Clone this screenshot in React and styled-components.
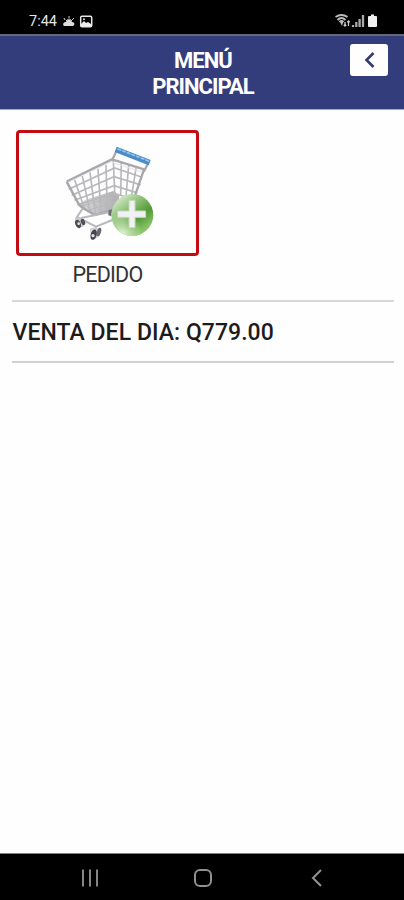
import React from 'react';
import styled, { createGlobalStyle } from 'styled-components';

const GlobalStyle = createGlobalStyle`
  * { box-sizing: border-box; }
  body { margin: 0; background: #fefefe; font-family: Roboto, "Liberation Sans", sans-serif; }
`;

const Screen = styled.div`
  width: 404px;
  height: 900px;
  display: flex;
  flex-direction: column;
  background: #fefefe;
  overflow: hidden;
`;

const StatusBar = styled.div`
  height: 36px;
  flex: none;
  background: #000;
  border-bottom: 2px solid #65677d;
  display: flex;
  justify-content: space-between;
  align-items: flex-start;
  padding: 12px 25px 0 29px;
`;

const StatusGroup = styled.div`
  display: flex;
  align-items: center;
  height: 18px;
`;

const Clock = styled.span`
  color: #e4e4e4;
  font-size: 14.5px;
  line-height: 18px;
  width: 33px;
  padding-top: 1px;
  white-space: nowrap;
`;

const Header = styled.header`
  height: 74px;
  flex: none;
  background: #343d7b;
  border-bottom: 1px solid #a4a7c8;
  display: grid;
  grid-template-columns: 57px 1fr 55px;
  padding-top: 8px;
`;

const Title = styled.h1`
  grid-column: 2;
  margin: 4px auto 0;
  width: 120px;
  color: #fff;
  font-size: 22px;
  font-weight: 700;
  line-height: 26px;
  text-align: center;
  letter-spacing: -0.95px;
`;

const BackButton = styled.button`
  width: 38px;
  height: 32px;
  margin-left: 1px;
  padding: 0;
  border: 0;
  border-radius: 3px;
  background: #fefefe;
  display: flex;
  align-items: center;
  justify-content: center;
`;

const Content = styled.main`
  flex: 1;
  padding: 20px 10px 0 12px;
`;

const MenuItem = styled.div`
  width: 183px;
  margin-left: 4px;
  display: flex;
  flex-direction: column;
  align-items: center;
`;

const MenuCard = styled.div`
  width: 183px;
  height: 126px;
  border: 3px solid #c30b14;
  border-radius: 4px;
  padding: 7px 0 0 41px;
`;

const MenuLabel = styled.div`
  margin-top: 6px;
  height: 26px;
  font-size: 21.5px;
  line-height: 26px;
  font-weight: 400;
  color: #333;
  letter-spacing: -0.8px;
`;

const SalesRow = styled.section`
  margin-top: 12px;
  height: 63px;
  border-top: 2px solid #d8d8d8;
  border-bottom: 2px solid #d0d0d0;
  color: #1c1c1c;
  font-size: 23px;
  font-weight: 500;
  line-height: 61px;
  letter-spacing: 0.05px;
  white-space: nowrap;
  padding-left: 0.5px;
`;

const NavBar = styled.nav`
  height: 47px;
  flex: none;
  background: #000;
  border-top: 1px solid #808080;
  display: grid;
  grid-template-columns: 22px 20px 16px;
  justify-content: space-between;
  align-items: center;
  padding: 1px 79px 0 79px;
`;

const HomeIcon = styled.svg`
  margin-left: -2px;
`;

function Cart() {
  return (
    <svg width="100" height="105" viewBox="0 0 300 315" fill="none">
      <defs>
        <linearGradient id="ball" x1="0.1" y1="0.1" x2="0.8" y2="1">
          <stop offset="0" stopColor="#d9edcf" />
          <stop offset="0.38" stopColor="#82b96a" />
          <stop offset="0.62" stopColor="#519a35" />
          <stop offset="1" stopColor="#9fd57d" />
        </linearGradient>
        <radialGradient id="glow" cx="0.25" cy="0.95" r="0.5">
          <stop offset="0" stopColor="#e6f7d8" />
          <stop offset="1" stopColor="#e6f7d8" stopOpacity="0" />
        </radialGradient>
        <linearGradient id="floor" x1="0" y1="0" x2="1" y2="0">
          <stop offset="0" stopColor="#d5d5d5" />
          <stop offset="1" stopColor="#a4a4a7" />
        </linearGradient>
      </defs>
      <path d="M74 180L160 153L178 168L172 204L104 224L60 196Z" fill="url(#floor)" opacity="0.9" />
      <g stroke="#b9b9bd" strokeWidth="5" strokeLinecap="round">
        <path d="M28 147L164 84L244 111M37 165L162 110L240 134M45 180L162 137L230 158M54 194L162 160L220 177" />
        <path d="M44 120L74 208M67 109L91 217M90 98L106 222M114 88L123 220M138 77L142 214M160 60L164 156L176 180" />
        <path d="M184 67L182 165M206 76L198 169M228 86L214 172" />
        <path d="M62 198L160 171M79 212L174 184M104 224L78 194M124 218L99 185M145 212L122 176M161 207L141 165" strokeWidth="3" />
      </g>
      <path d="M20 125L154 59L166 61L252 88L222 176M20 125L55 190Q60 199 70 205L104 225L170 206" stroke="#a8a8ac" strokeWidth="7" strokeLinejoin="round" />
      <path d="M24 127L155 65L162 69L246 96" stroke="#e4e4e6" strokeWidth="3" />
      <path d="M157 59L169 34M253 92L265 68" stroke="#a8a9ae" strokeWidth="7" strokeLinecap="round" />
      <path d="M167 28L269 68" stroke="#4b8cc8" strokeWidth="17" />
      <path d="M174 27L266 63" stroke="#94c4e9" strokeWidth="5" strokeLinecap="round" strokeDasharray="8 7" />
      <path d="M68 205L51 231L108 260L157 240M51 231L48 242M108 260L108 272M63 234L151 216" stroke="#b9b9bd" strokeWidth="6" strokeLinejoin="round" />
      <g>
        <path d="M45 234Q62 229 75 243L70 260L59 263L46 246Z" fill="#cacacd" />
        <ellipse cx="54" cy="252" rx="8" ry="13" fill="#4c4d54" transform="rotate(-22 54 252)" />
        <ellipse cx="69" cy="246" rx="6" ry="10" fill="#515259" transform="rotate(-22 69 246)" />
        <circle cx="56" cy="251" r="4" fill="#e4e4e4" />
        <path d="M91 265Q106 258 124 269L116 291L102 298L90 276Z" fill="#d4d4d7" />
        <ellipse cx="101" cy="284" rx="9" ry="16" fill="#42434b" transform="rotate(16 101 284)" />
        <ellipse cx="117" cy="276" rx="6" ry="13" fill="#666770" transform="rotate(16 117 276)" />
        <circle cx="99" cy="287" r="5" fill="#dfdfe1" />
        <path d="M146 211L157 208L154 229L145 226Z" fill="#6c6d73" />
      </g>
      <circle cx="217" cy="225" r="63" fill="url(#ball)" />
      <circle cx="217" cy="225" r="63" fill="url(#glow)" />
      <path d="M207 181H225V213H257V232H225V263H207V232H173V213H207Z" fill="#f1f0f4" stroke="#c2d9b7" strokeWidth="3" />
    </svg>
  );
}

export default function App() {
  return (
    <>
      <GlobalStyle />
      <Screen>
        <StatusBar>
          <StatusGroup>
            <Clock>7:44</Clock>
            <svg width="32" height="15" viewBox="0 0 32 15" fill="none">
              <path d="M2 12C0 10 2 8 4 8C5 5 9 5 10 8C13 8 13 11 11 12Z" fill="#ddd" />
              <path d="M3 6L2 4M7 4V2M10 6L12 4M4 7Q7 3 10 7" stroke="#ccc" />
              <rect x="18.7" y="2.2" width="11" height="10.5" rx="1.3" stroke="#e7e7e7" strokeWidth="1.5" />
              <path d="M19 12V10L22 7L24 9L26 8L29 10V12Z" fill="#eee" />
              <circle cx="22" cy="5.2" r="1" fill="#ddd" />
            </svg>
          </StatusGroup>
          <StatusGroup>
            <svg width="44" height="17" viewBox="0 0 44 17" fill="none">
              <path d="M0.5 4Q6.5 0 12.5 4M2.5 7Q6.5 3 10.5 7M4.5 9Q6.5 7 8.5 9" stroke="#bbb" strokeWidth="2" />
              <path d="M5 9L7 13L8.5 8Z" fill="#bbb" />
              <path d="M10 9V13M8.8 11.7L10 13L11.2 11.7M13.5 13V8M12.3 9.2L13.5 8L14.7 9.2" stroke="#ccc" strokeWidth="1.3" />
              <path d="M18 14V12M21.3 14V9M24.6 14V6M28 14V2" stroke="#aaa" strokeWidth="2.3" />
              <path d="M34 3H36V1.5H39V3H41Q42 3 42 4V13Q42 14 41 14H34Q33 14 33 13V4Q33 3 34 3Z" fill="#efefef" />
            </svg>
          </StatusGroup>
        </StatusBar>
        <Header>
          <Title>MENÚ PRINCIPAL</Title>
          <BackButton aria-label="Atrás">
            <svg width="14" height="18" viewBox="0 0 14 18" fill="none">
              <path d="M11.5 2L4.5 9L11.5 16" stroke="#343c76" strokeWidth="2.6" />
            </svg>
          </BackButton>
        </Header>
        <Content>
          <MenuItem>
            <MenuCard><Cart /></MenuCard>
            <MenuLabel>PEDIDO</MenuLabel>
          </MenuItem>
          <SalesRow>VENTA DEL DIA: Q779.00</SalesRow>
        </Content>
        <NavBar>
          <svg width="22" height="20" viewBox="0 0 22 20" fill="none">
            <path d="M4 1.5V18.5M11 1.5V18.5M18 1.5V18.5" stroke="#858585" strokeWidth="2" />
          </svg>
          <HomeIcon width="20" height="20" viewBox="0 0 20 20" fill="none">
            <rect x="2" y="2" width="16" height="16" rx="5" stroke="#919191" strokeWidth="2" />
          </HomeIcon>
          <svg width="16" height="20" viewBox="0 0 16 20" fill="none">
            <path d="M12 2L4 10L12 18" stroke="#939393" strokeWidth="2" />
          </svg>
        </NavBar>
      </Screen>
    </>
  );
}
